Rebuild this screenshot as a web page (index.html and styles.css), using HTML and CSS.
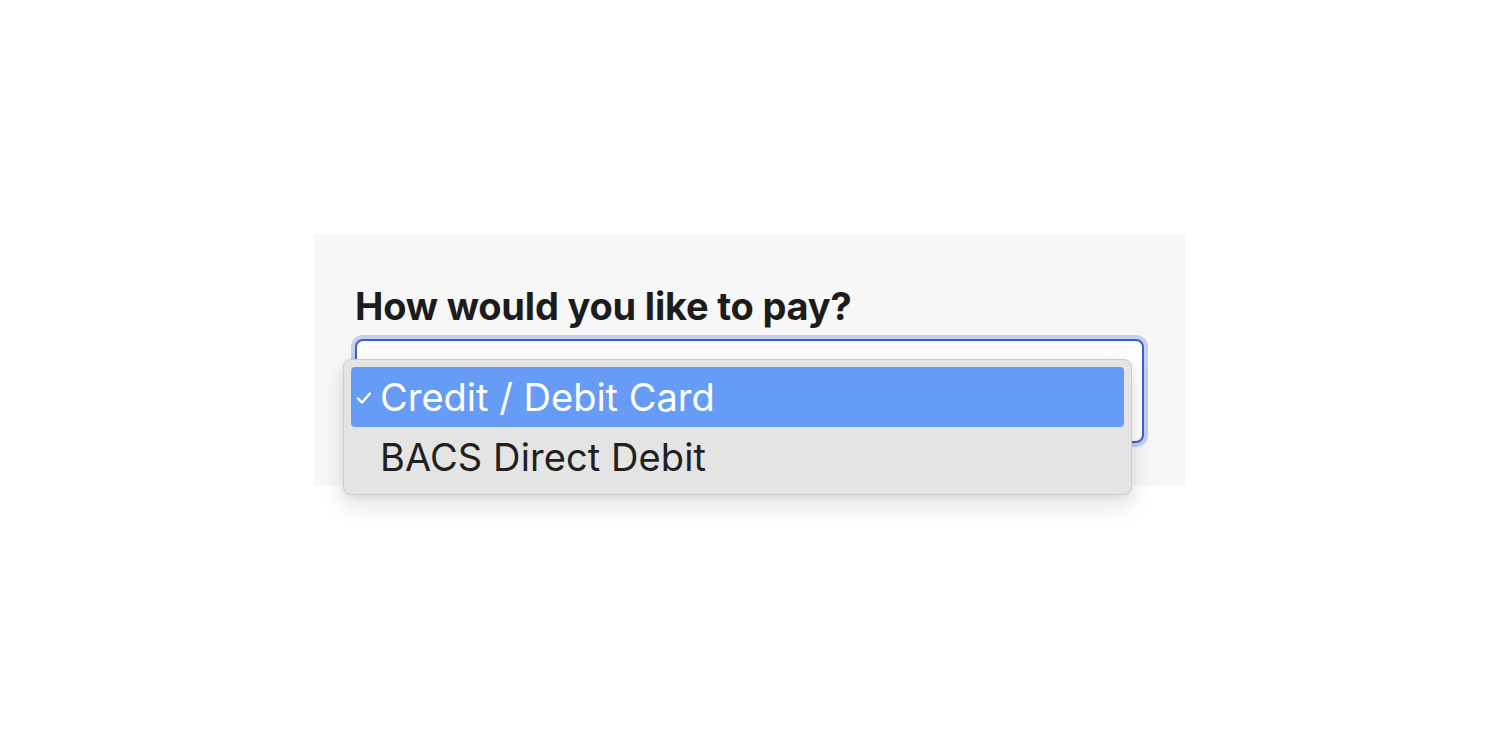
FILE: index.html
```html
<!DOCTYPE html>
<html>
<head>
<meta charset="utf-8">
<link rel="stylesheet" href="styles.css">
</head>
<body>
<div class="page">
  <div class="panel">
    <h1 class="question">How would you like to pay?</h1>
    <div class="field">
      <div class="select"></div>
      <div class="menu">
        <div class="option selected">
          <svg class="check" viewBox="0 0 16 14" width="16" height="14"><path d="M2 7.5 L6 11.5 L14 2.5" fill="none" stroke="#fff" stroke-width="2.3" stroke-linecap="round" stroke-linejoin="round"/></svg>
          <span>Credit / Debit Card</span>
        </div>
        <div class="option">
          <span>BACS Direct Debit</span>
        </div>
      </div>
    </div>
  </div>
</div>
</body>
</html>
```

FILE: styles.css
```css
html, body {
  margin: 0;
  padding: 0;
  background: #ffffff;
}
body {
  font-family: Inter, "Liberation Sans", sans-serif;
}
.page {
  height: 750px;
  box-sizing: border-box;
  padding-top: 234px;
  padding-left: 314px;
}
.panel {
  width: 871px;
  height: 252px;
  background: #f7f7f7;
  box-sizing: border-box;
  padding: 52px 0 0 41px;
}
.question {
  margin: 0;
  font-size: 38px;
  font-weight: 700;
  color: #1c1c1c;
  line-height: 40px;
  letter-spacing: -0.2px;
}
.field {
  position: relative;
  margin-top: 13px;
  width: 789px;
}
.select {
  height: 104px;
  box-sizing: border-box;
  background: #fff;
  border: 2px solid #3b5fcf;
  border-radius: 8px;
  box-shadow: 0 0 0 4px #c6ceec;
}
.menu {
  position: absolute;
  left: -12px;
  top: 20px;
  width: 789px;
  box-sizing: border-box;
  background: #e4e4e4;
  border: 1px solid #cdcdcd;
  border-radius: 8px;
  padding: 7px;
  box-shadow: 0 10px 24px rgba(0,0,0,0.12), 0 2px 6px rgba(0,0,0,0.06);
}
.option {
  display: flex;
  align-items: center;
  height: 60px;
  padding-left: 29px;
  position: relative;
  font-size: 38px;
  color: #202020;
  border-radius: 4px;
  letter-spacing: 0.1px;
}
.option.selected {
  background: #669cf6;
  color: #ffffff;
  letter-spacing: 0px;
}
.check {
  position: absolute;
  left: 5px;
  top: 24px;
}
```
